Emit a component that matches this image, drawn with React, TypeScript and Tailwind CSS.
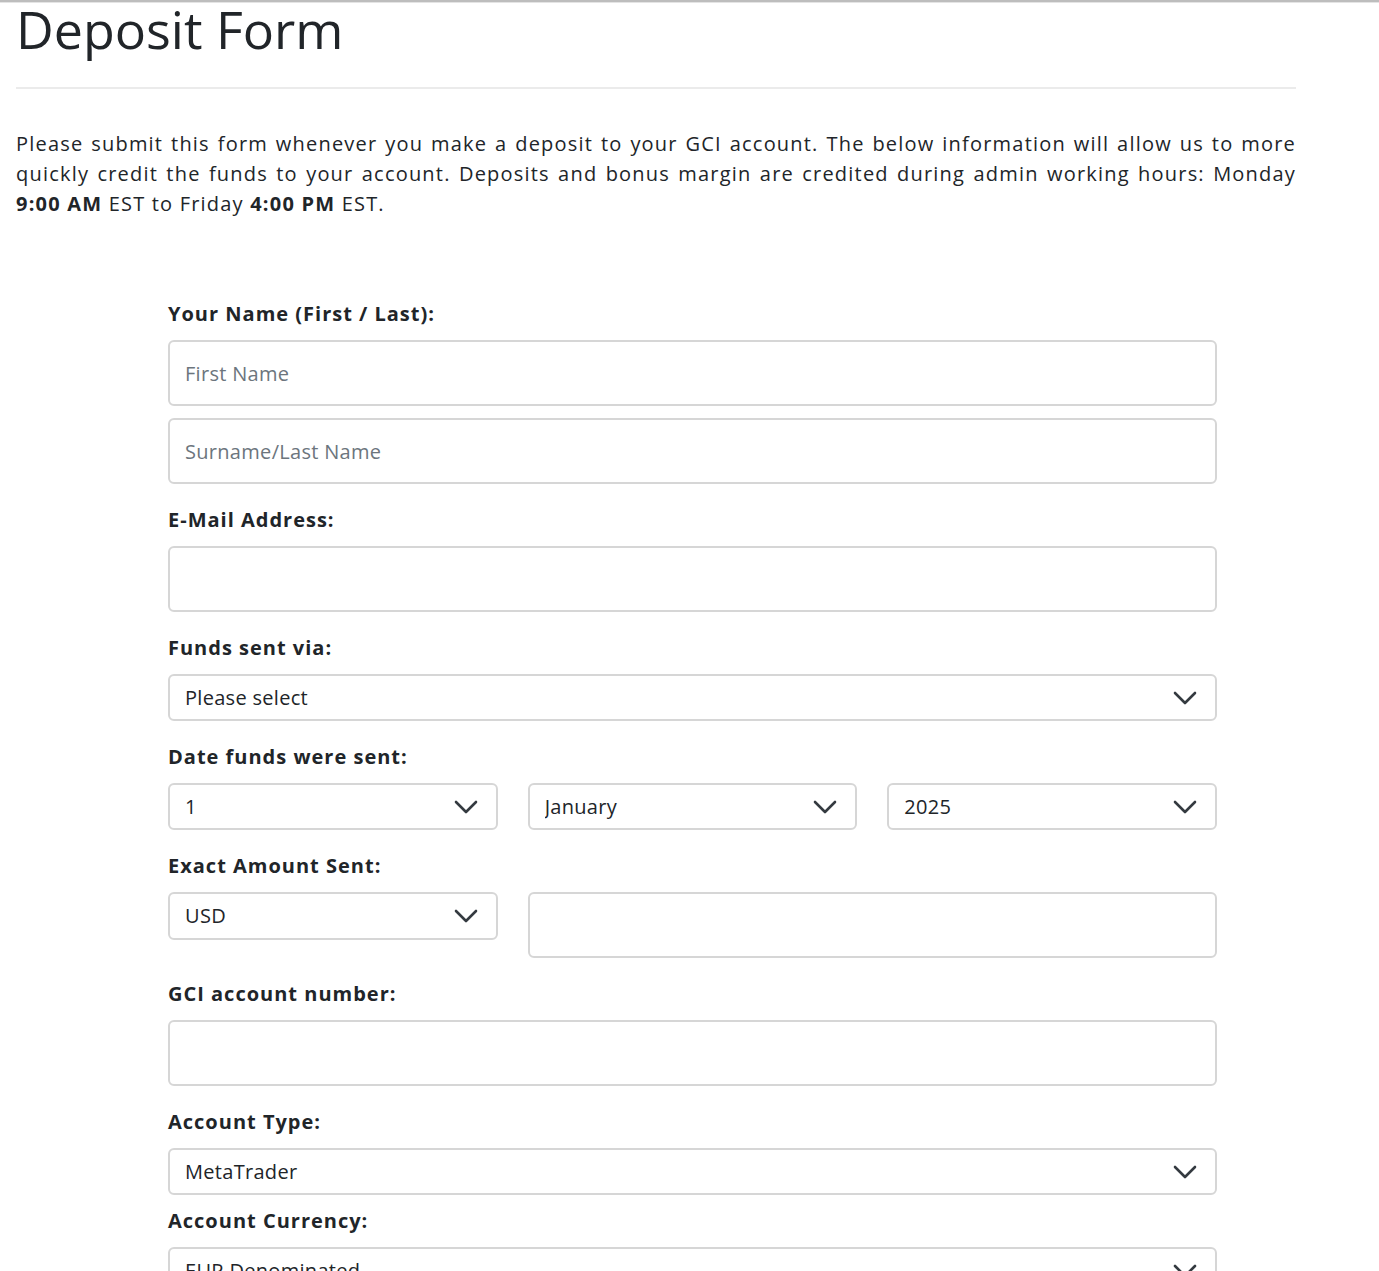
import React from 'react';

const font = { fontFamily: '"Open Sans", "Noto Sans", sans-serif' };

const Chevron: React.FC = () => (
    <svg width="24" height="14" viewBox="0 0 24 14" fill="none" className="shrink-0 pointer-events-none">
        <polyline points="2,2 12,12 22,2" stroke="#343a40" strokeWidth="2.6" strokeLinecap="round" strokeLinejoin="round" />
    </svg>
);

interface SelectBoxProps {
    value: string;
    options: string[];
    height?: string;
}

const SelectBox: React.FC<SelectBoxProps> = ({ value, options, height = 'h-[47px]' }) => {
    return (
        <div className={`flex items-center border-2 border-[#d6d6d6] rounded-md bg-white pr-[18px] ${height}`}>
            <select
                defaultValue={value}
                className="flex-1 h-full appearance-none bg-transparent pl-[15px] text-[20px] tracking-[0.3px] text-[#212529] outline-none"
                style={font}
            >
                {options.map((o) => (
                    <option key={o}>{o}</option>
                ))}
            </select>
            <Chevron />
        </div>
    );
};

const TextBox: React.FC<{ placeholder?: string }> = ({ placeholder }) => (
    <input
        type="text"
        placeholder={placeholder}
        className="w-full h-[66px] border-2 border-[#d6d6d6] rounded-md px-[15px] text-[20px] tracking-[0.3px] text-[#212529] placeholder:text-[#6c757d] outline-none"
        style={font}
    />
);

const Label: React.FC<{ children: React.ReactNode }> = ({ children }) => (
    <label className="block h-[30px] leading-[30px] text-[20px] font-bold text-[#212529] mb-[11px] tracking-[1px]">
        {children}
    </label>
);

const App: React.FC = () => {
    const days = Array.from({ length: 31 }, (_, i) => String(i + 1));
    const months = ['January', 'February', 'March', 'April', 'May', 'June', 'July', 'August', 'September', 'October', 'November', 'December'];

    return (
        <div className="min-h-screen bg-white text-[#212529]" style={font}>
            <div className="h-[2px] bg-[#bdbdbd]" />
            <div className="h-px bg-[#e4e4e4]" />

            <div className="w-[1280px] ml-4">
                <h1 className="text-[52px] leading-[52px] font-normal text-[#212529]">Deposit Form</h1>
                <hr className="mt-[32px] border-0 h-[2px] bg-[#ebebeb]" />

                <p className="mt-[40px] text-[20px] leading-[30px] tracking-[1.2px] text-justify text-[#212529]">
                    Please submit this form whenever you make a deposit to your GCI account. The below information will allow us to more quickly credit the funds to your account. Deposits and bonus margin are credited during admin working hours: Monday <b>9:00 AM</b> EST to Friday <b>4:00 PM</b> EST.
                </p>
            </div>

            <form className="w-[1049px] ml-[168px] mt-[80px]">
                <div className="mb-[21px]">
                    <Label>Your Name (First / Last):</Label>
                    <TextBox placeholder="First Name" />
                    <div className="mt-[12px]">
                        <TextBox placeholder="Surname/Last Name" />
                    </div>
                </div>

                <div className="mb-[21px]">
                    <Label>E-Mail Address:</Label>
                    <TextBox />
                </div>

                <div className="mb-[21px]">
                    <Label>Funds sent via:</Label>
                    <SelectBox value="Please select" options={['Please select', 'Bank Wire', 'Credit Card', 'E-Wallet']} />
                </div>

                <div className="mb-[21px]">
                    <Label>Date funds were sent:</Label>
                    <div className="grid grid-cols-3 gap-[30px]">
                        <SelectBox value="1" options={days} />
                        <SelectBox value="January" options={months} />
                        <SelectBox value="2025" options={['2023', '2024', '2025']} />
                    </div>
                </div>

                <div className="mb-[21px]">
                    <Label>Exact Amount Sent:</Label>
                    <div className="grid grid-cols-3 gap-[30px] items-start">
                        <SelectBox value="USD" options={['USD', 'EUR', 'GBP']} height="h-[48px]" />
                        <div className="col-span-2">
                            <TextBox />
                        </div>
                    </div>
                </div>

                <div className="mb-[21px]">
                    <Label>GCI account number:</Label>
                    <TextBox />
                </div>

                <div className="mb-[11px]">
                    <Label>Account Type:</Label>
                    <SelectBox value="MetaTrader" options={['MetaTrader', 'Standard']} />
                </div>

                <div className="mb-[21px]">
                    <Label>Account Currency:</Label>
                    <SelectBox value="EUR Denominated" options={['EUR Denominated', 'USD Denominated']} />
                </div>
            </form>
        </div>
    );
};

export default App;
